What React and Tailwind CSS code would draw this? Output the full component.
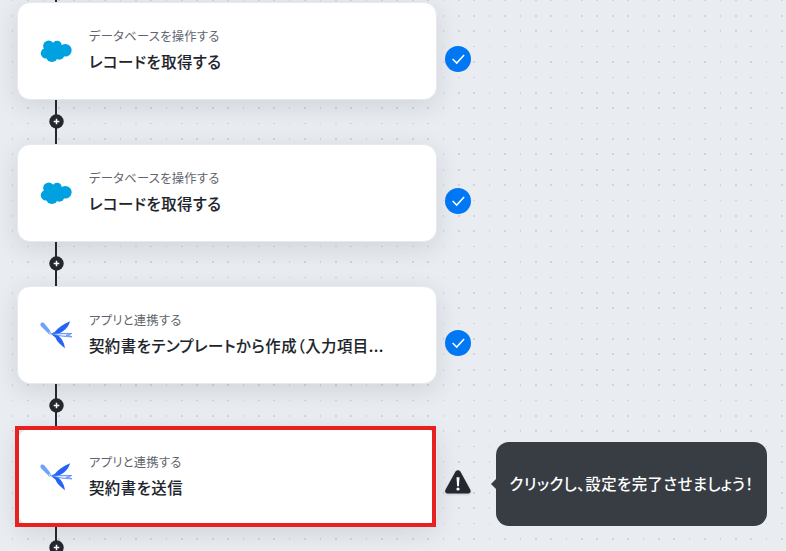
const COLUMNS = Array.from({ length: 51 }, (_, i) => 11.809 + i * 15.385);
const ROWS = Array.from({ length: 36 }, (_, i) => -0.4 + i * 15.385);

function DotGrid() {
  return (
    <svg className="absolute inset-0" width="786" height="551" fill="#d0d3d8">
      {ROWS.map((y) =>
        COLUMNS.map((x) => {
          const left = Math.round(x);
          const top = Math.round(y);
          return (
            <rect
              key={`${left}-${top}`}
              x={left}
              y={top}
              width={Math.round(x + 1.69) - left}
              height={Math.round(y + 1.69) - top}
            />
          );
        })
      )}
    </svg>
  );
}

function CloudIcon() {
  return (
    <svg width="32" height="32" viewBox="0 0.7 32 32" fill="#00a1e0" className="mt-px shrink-0">
      <circle cx="8.7" cy="10.8" r="5.6" />
      <circle cx="17.1" cy="10" r="4.6" />
      <circle cx="25.3" cy="15" r="6.3" />
      <circle cx="6" cy="17.9" r="5.2" />
      <circle cx="11.9" cy="20.7" r="6" />
      <circle cx="19.3" cy="19.4" r="5" />
      <path d="M8 10h14v10H8z" />
    </svg>
  );
}

function DragonflyIcon() {
  return (
    <svg width="32" height="32" viewBox="0 0.6 32 32" className="mt-px shrink-0">
      <path d="M.5 4.3C1 2.9 3.3 2.7 4.3 3.8l5.2 6.6c.8 1 1 2.5.9 3.6-1.7.1-2.5-.4-3.3-1.2L1.3 7C.5 6.2.2 5.2.5 4.3z" fill="#6fa3fb" />
      <circle cx="9.6" cy="13.6" r="1.2" fill="#e4edff" stroke="#6fa3fb" strokeWidth=".9" />
      <path d="M10.6 14.8c1.2-1.1 2.6-1.4 4.1-2.3 3.8-4.6 8.6-7.6 15.3-10.7-1.4 5.7-5.3 9.8-11.2 12.2l-4.2 1.2z" fill="#2563f6" />
      <path d="M11.5 15.2l5.6-.1c3.7 3 7.3 7.4 7.8 13.7-3.9-3.6-8-6.4-9.5-10.8z" fill="#2563f6" />
      <path d="M12.5 14.7c6.3-.7 12.8-.8 19.2-.6-1.6 1.1-3.7 1.2-5.6 1.7 2 .5 4.4.4 5.8 1.7-6.6-.3-13.3-.9-19.4-2.8z" fill="#dce7ff" stroke="#4b80f8" strokeWidth=".8" />
    </svg>
  );
}

function CheckBadge() {
  return (
    <div className="flex size-[26px] shrink-0 items-center justify-center rounded-full bg-[#0078f5]">
      <svg width="26" height="26" viewBox="0 0 26 26" fill="none" stroke="#fff" strokeWidth="1.5">
        <path d="M7.6 13l4.1 4.1 7.4-8.2" />
      </svg>
    </div>
  );
}

function WarningBadge() {
  return (
    <svg width="26" height="26" viewBox="0 0 26 26" className="-mt-[4px] shrink-0 drop-shadow-[0_1px_1px_rgba(0,0,0,0.15)]">
      <path d="M10.4 1.8c1.1-2 4-2 5.1 0l9.8 18c1 1.9-.2 3.6-2 3.6H2.5c-1.9 0-3-1.8-2-3.6z" fill="#25292f" />
      <path d="M11.5 7.3h3l-.6 9h-1.8z" fill="#fff" />
      <circle cx="13" cy="19" r="1.6" fill="#fff" />
    </svg>
  );
}

function Connector() {
  return (
    <div className="mt-px ml-[38px] flex h-[44px] w-[2px] items-start justify-center bg-[#25292f] pt-[14px]">
      <svg width="15" height="15" viewBox="0 0 15 15" className="ml-px shrink-0">
        <circle cx="7.5" cy="7.5" r="7.2" fill="#25292f" />
        <path d="M4.7 7.5h5.6M7.5 4.7v5.6" stroke="#fff" strokeWidth="1.5" />
      </svg>
    </div>
  );
}

function Tooltip({ children }) {
  return (
    <div className="relative -mt-[2px] ml-[25px] flex h-[84px] w-[271px] shrink-0 items-center rounded-[13px] bg-[#383c43] pl-[13.5px]">
      <svg width="6" height="12" viewBox="0 0 6 12" className="absolute -left-[5px] top-9" fill="#383c43">
        <path d="M6 0v12L0 6z" />
      </svg>
      <span className="whitespace-nowrap text-[15.4px] font-medium tracking-[0.46px] text-white">{children}</span>
    </div>
  );
}

function Step({ Icon, category, title, highlighted, children }) {
  return (
    <div className="flex h-[97px] items-start">
      <div className="relative flex h-[98px] w-[420px] shrink-0 items-center rounded-[13px] border border-[#e6e9ed] bg-white pl-[22px] shadow-[0_6px_24px_rgba(35,45,50,0.12)]">
        <Icon />
        <div className="-mt-[2px] ml-[17px] whitespace-nowrap">
          <div className="text-[12.3px] leading-[18px] tracking-[0.28px] text-[#5f656e]">{category}</div>
          <div className="mt-[3px] text-[15.4px] font-medium leading-[26px] tracking-[0.48px] text-[#20242a] [-webkit-text-stroke:0.1px_#20242a]">{title}</div>
        </div>
        {highlighted && (
          <div className="absolute -left-[3px] -top-[3px] h-[101px] w-[421px] border-4 border-[#e72020]" />
        )}
      </div>
      <div className="ml-[8px] flex h-[113px] items-center">{children}</div>
    </div>
  );
}

export default function App() {
  return (
    <div className="relative h-[551px] w-[786px] overflow-hidden bg-[#e9ecf1] font-['Noto_Sans_CJK_JP',sans-serif] [font-feature-settings:'palt']">
      <DotGrid />
      <div className="relative ml-[17px] flex flex-col">
        <div className="ml-[38px] h-[2px] w-[2px] bg-[#25292f]" />
        <Step Icon={CloudIcon} category="データベースを操作する" title="レコードを取得する">
          <CheckBadge />
        </Step>
        <Connector />
        <Step Icon={CloudIcon} category="データベースを操作する" title="レコードを取得する">
          <CheckBadge />
        </Step>
        <Connector />
        <Step Icon={DragonflyIcon} category="アプリと連携する" title="契約書をテンプレートから作成（入力項目...">
          <CheckBadge />
        </Step>
        <Connector />
        <Step Icon={DragonflyIcon} category="アプリと連携する" title="契約書を送信" highlighted>
          <WarningBadge />
          <Tooltip>クリックし、設定を完了させましょう！</Tooltip>
        </Step>
        <Connector />
      </div>
    </div>
  );
}
